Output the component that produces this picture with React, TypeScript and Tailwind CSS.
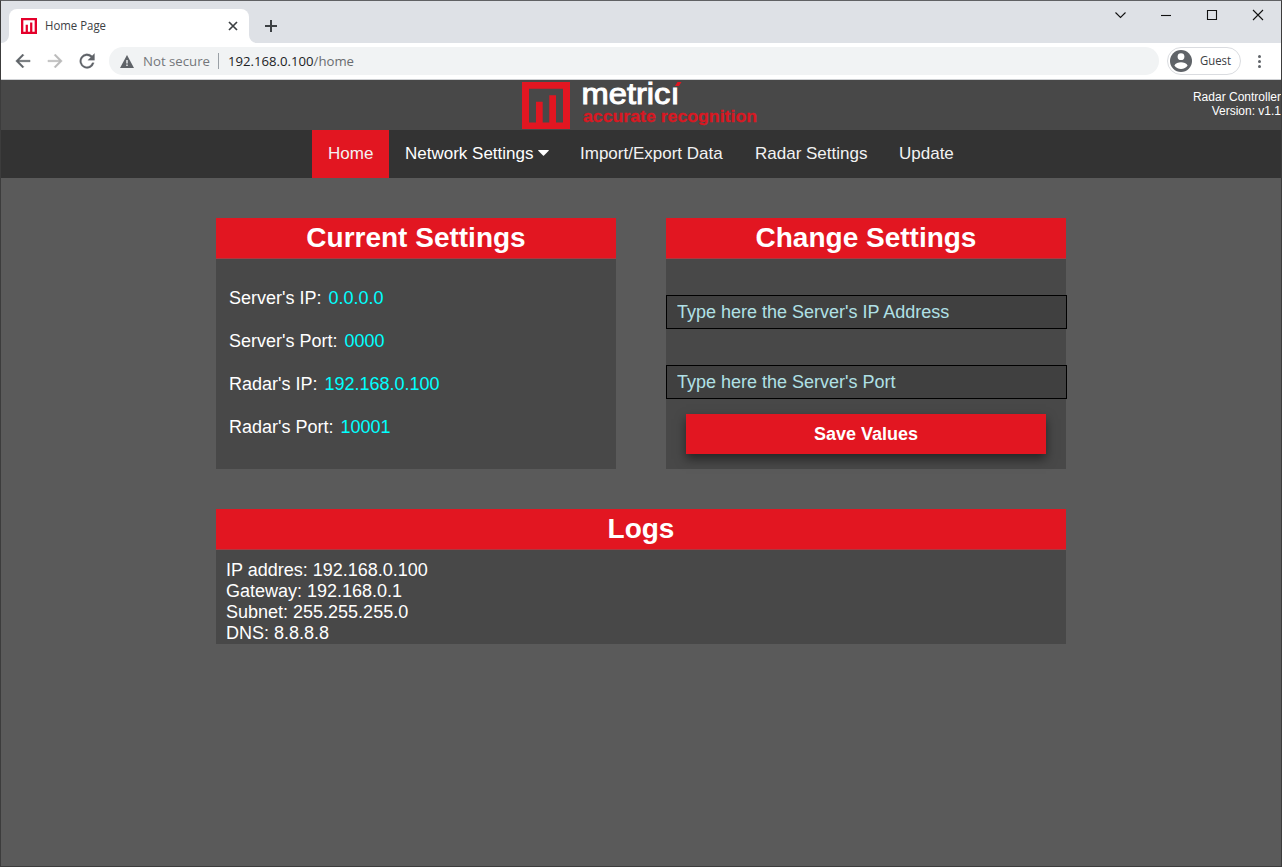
import React from "react";

const arial = "font-['Liberation_Sans',Arial,sans-serif]";

function LogoMark({ className }: { className: string }) {
  return (
    <svg viewBox="0 0 48 47" preserveAspectRatio="none" className={className}>
      <path
        fill="currentColor"
        fillRule="evenodd"
        d="M0 0H48V47H0Z M7 6.7V40.5H14V19.7H20.7V40.5H27.3V13.2H34V40.5H41V6.7Z"
      />
    </svg>
  );
}

function TabStrip() {
  return (
    <div className="flex h-[42px] items-start justify-between bg-[#dee1e6]">
      <div className="flex h-[42px] items-end">
        <svg width="8" height="8" className="text-white">
          <path d="M8 0V8H0A8 8 0 0 0 8 0Z" fill="currentColor" />
        </svg>
        <div className="flex h-[34px] w-[240px] items-center rounded-t-lg bg-white pl-3 pr-[11px]">
          <LogoMark className="h-4 w-4 text-[#e4002b]" />
          <svg width="180" height="20" className="ml-2">
            <text x="0" y="14" fontSize="12" fill="#3c4043" textLength="61" className="font-['Open_Sans',sans-serif]" lengthAdjust="spacingAndGlyphs">
              Home Page
            </text>
          </svg>
          <svg width="10" height="10" viewBox="0 0 10 10" className="ml-auto shrink-0" stroke="#3c4043" strokeWidth="1.7">
            <path d="M1 1L9 9M9 1L1 9" />
          </svg>
        </div>
        <svg width="8" height="8" className="text-white">
          <path d="M0 0V8H8A8 8 0 0 1 0 0Z" fill="currentColor" />
        </svg>
        <svg width="12" height="12" viewBox="0 0 12 12" className="mb-[11px] ml-2" stroke="#3c4043" strokeWidth="2">
          <path d="M6 0V12M0 6H12" />
        </svg>
      </div>
      <div className="flex h-7 items-center">
        {[
          "M6.5 7.5L11.5 12.5L16.5 7.5",
          "M6 10.5H16",
          "M6.5 5.5H15.5V14.5H6.5Z",
          "M6 5L16 15M16 5L6 15",
        ].map((d) => (
          <div key={d} className="flex w-[46px] justify-center">
            <svg width="22" height="20" viewBox="0 0 22 20" fill="none" stroke="#111" strokeWidth="1.1">
              <path d={d} />
            </svg>
          </div>
        ))}
      </div>
    </div>
  );
}

function Toolbar() {
  return (
    <div className="flex h-[37px] items-center border-b border-[#cfd1d4] bg-white pl-3 pr-3">
      <svg width="20" height="20" viewBox="0 0 24 24" fill="#5f6368" stroke="#5f6368" strokeWidth="0.4">
        <path d="M20.5 11H7.2l5.9-5.9L11.6 3.6 3.2 12l8.4 8.4 1.5-1.5L7.2 13h13.3z" />
      </svg>
      <svg width="20" height="20" viewBox="0 0 24 24" fill="#bababa" stroke="#bababa" strokeWidth="0.4" className="ml-3">
        <path d="M3.5 11h13.3l-5.9-5.9 1.5-1.5 8.4 8.4-8.4 8.4-1.5-1.5 5.9-5.9H3.5z" />
      </svg>
      <svg width="20" height="20" viewBox="0 0 24 24" fill="#5f6368" stroke="#5f6368" strokeWidth="0.3" className="ml-3">
        <path d="M18.2 5.8A8.8 8.8 0 1 0 20.6 14.2H18.2A6.6 6.6 0 1 1 16.5 7.4L13 11h8V3z" />
      </svg>
      <div className="ml-3 flex h-7 w-[1050px] items-center rounded-full bg-[#f1f3f4] pl-[11px]">
        <svg width="14" height="13" viewBox="0 0 14 13">
          <path d="M7 0L14 13H0Z" fill="#5f6368" />
          <path d="M6.3 5h1.4v3.5H6.3zM6.3 9.6h1.4V11H6.3z" fill="#f1f3f4" />
        </svg>
        <svg width="300" height="24" className="ml-[9px] font-['Open_Sans',sans-serif]" fontSize="13.5">
          <text x="0" y="17" fill="#74777b" textLength="67" lengthAdjust="spacingAndGlyphs">Not secure</text>
          <path d="M75.5 4V20" stroke="#9aa0a6" />
          <text x="85" y="17" fill="#202124" textLength="126" lengthAdjust="spacingAndGlyphs">
            192.168.0.100<tspan fill="#696c70">/home</tspan>
          </text>
        </svg>
      </div>
      <div className="ml-2 flex h-7 w-[74px] items-center rounded-full border border-[#dadce0] pl-[2px]">
        <svg width="22" height="22" viewBox="0 0 22 22">
          <circle cx="11" cy="11" r="11" fill="#5f6368" />
          <circle cx="11" cy="6.7" r="3.4" fill="white" />
          <path d="M4.4 15.4C5.3 13 8.5 12.2 11 12.2S16.7 13 17.6 15.4C16.2 17.6 13.8 18.9 11 18.9S5.8 17.6 4.4 15.4Z" fill="white" />
        </svg>
        <svg width="34" height="20" className="ml-2">
          <text x="0" y="14" fontSize="12" fill="#3c4043" textLength="31" lengthAdjust="spacingAndGlyphs" className="font-['Open_Sans',sans-serif]">Guest</text>
        </svg>
      </div>
      <svg width="4" height="14" viewBox="0 0 4 14" fill="#5f6368" className="ml-4">
        <circle cx="2.5" cy="2.5" r="1.5" />
        <circle cx="2.5" cy="7.5" r="1.5" />
        <circle cx="2.5" cy="12.5" r="1.5" />
      </svg>
    </div>
  );
}

function Header() {
  return (
    <header className="grid h-[50px] grid-cols-[1fr_238px_1fr] bg-[#484848]">
      <div />
      <div className="flex">
        <LogoMark className="mt-[2px] h-[47px] w-12 shrink-0 text-[#e21621]" />
        <svg width="190" height="50" className={`overflow-visible ${arial}`}>
          <text x="11.5" y="24.3" fontSize="30" fill="white" stroke="white" strokeWidth="1" textLength="98" lengthAdjust="spacingAndGlyphs">metricı</text>
          <path d="M105 6L107.500 2H111.500L109 6Z" fill="#e21621" />
          <text x="13" y="41.500" fontSize="17" fontWeight="bold" fill="#d81822" stroke="#d81822" strokeWidth="0.3" textLength="174" lengthAdjust="spacingAndGlyphs">accurate recognition</text>
        </svg>
      </div>
      <div className="pt-[10px] text-right text-[12px] leading-[14px] text-white">
        <p>Radar Controller</p>
        <p>Version: v1.1</p>
      </div>
    </header>
  );
}

function Nav() {
  return (
    <nav className="flex h-12 bg-[#333] pl-[311px] text-[17px] leading-[48px] text-[#f2f2f2]">
      <a className="w-[77px] bg-[#e21621] pl-4">Home</a>
      <a className="flex w-[175px] pl-4 text-white">
        <span>Network Settings</span>
        <svg width="11" height="6" viewBox="0 0 11 6" className="ml-1 mt-5">
          <path d="M0.5 0H10.5Q11 .3 10.7.8L6 5.6Q5.5 6 5 5.6L.3.8Q0 .3.5 0Z" fill="white" />
        </svg>
      </a>
      <a className="w-[175px] pl-4">Import/Export Data</a>
      <a className="w-[144px] pl-4">Radar Settings</a>
      <a className="pl-4">Update</a>
    </nav>
  );
}

function Card({ title, className, children }: { title: string; className: string; children: React.ReactNode }) {
  return (
    <section className={`bg-[#484848] ${className}`}>
      <h2 className="h-[41px] border-b border-[#a93a42] bg-[#e21621] text-center text-[28px] font-bold leading-[40px] text-white">
        {title}
      </h2>
      {children}
    </section>
  );
}

const settings = [
  ["Server's IP:", "0.0.0.0"],
  ["Server's Port:", "0000"],
  ["Radar's IP:", "192.168.0.100"],
  ["Radar's Port:", "10001"],
];

const logs = ["IP addres: 192.168.0.100", "Gateway: 192.168.0.1", "Subnet: 255.255.255.0", "DNS: 8.8.8.8"];

const field =
  "block h-[34px] w-[401px] border border-black bg-[#404040] px-[10px] text-[18px] text-white outline-none placeholder:text-[#b0e0e6] placeholder:opacity-100";

export default function App() {
  return (
    <div className={`flex h-[867px] w-[1282px] flex-col overflow-hidden border border-[#3c3c3c] border-t-[#606164] bg-[#5a5a5a] ${arial}`}>
      <TabStrip />
      <Toolbar />
      <Header />
      <Nav />
      <main className="mx-auto w-[850px] pt-10 text-[18px] text-white">
        <div className="flex gap-[50px]">
          <Card title="Current Settings" className="h-[251px] w-[400px]">
            <dl className="flex flex-col gap-[22px] pl-[13px] pt-[29px] leading-[21px]">
              {settings.map(([label, value]) => (
                <div key={label} className="flex gap-[7px]">
                  <dt>{label}</dt>
                  <dd className="text-[#00ffff]">{value}</dd>
                </div>
              ))}
            </dl>
          </Card>
          <Card title="Change Settings" className="h-[251px] w-[400px]">
            <div className="pt-9">
              <input className={field} placeholder="Type here the Server's IP Address" />
              <input className={`mt-9 ${field}`} placeholder="Type here the Server's Port" />
              <button className="mx-5 mt-[15px] block h-10 w-[360px] bg-[#e21621] text-[18px] font-bold shadow-[0_5px_10px_rgba(0,0,0,0.5)]">
                Save Values
              </button>
            </div>
          </Card>
        </div>
        <Card title="Logs" className="mt-10 h-[135px]">
          <div className="pl-[10px] pt-[10px] leading-[21px]">
            {logs.map((line) => (
              <p key={line}>{line}</p>
            ))}
          </div>
        </Card>
      </main>
    </div>
  );
}
